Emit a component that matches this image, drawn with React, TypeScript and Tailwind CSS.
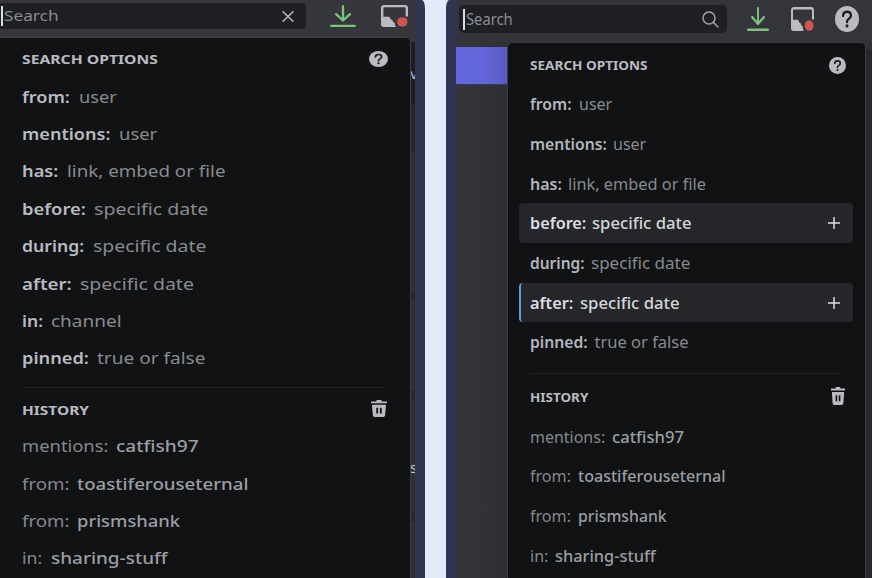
import { useLayoutEffect, useRef, useState } from "react";
import clsx from "clsx";

type Term = { k: string; kw: number; v: string; x: number; w: number; state?: "hover" | "active" };

/** Text stretched horizontally to an exact width. */
function Fit({ text, w, className }: { text: string; w: number; className?: string }) {
  const ref = useRef<HTMLSpanElement>(null);
  const [scale, setScale] = useState(1);
  useLayoutEffect(() => {
    if (ref.current) setScale(w / ref.current.offsetWidth);
  }, [w, text]);
  return (
    <span className="block shrink-0 whitespace-nowrap" style={{ width: w }}>
      <span ref={ref} className={clsx("inline-block origin-left", className)} style={{ transform: `scaleX(${scale})` }}>
        {text}
      </span>
    </span>
  );
}

const leftOptions: Term[] = [
  { k: "from:", kw: 48, v: "user", x: 9, w: 37.5 },
  { k: "mentions:", kw: 88.5, v: "user", x: 8, w: 38 },
  { k: "has:", kw: 36.5, v: "link, embed or file", x: 8, w: 158.5 },
  { k: "before:", kw: 64, v: "specific date", x: 8, w: 115 },
  { k: "during:", kw: 62.5, v: "specific date", x: 8.5, w: 114 },
  { k: "after:", kw: 49.5, v: "specific date", x: 8.5, w: 114.5 },
  { k: "in:", kw: 21.5, v: "channel", x: 7.5, w: 71 },
  { k: "pinned:", kw: 67, v: "true or false", x: 8, w: 108 },
];
const leftHistory: Term[] = [
  { k: "mentions:", kw: 86.5, v: "catfish97", x: 7.5, w: 82.5 },
  { k: "from:", kw: 47, v: "toastiferouseternal", x: 8, w: 171 },
  { k: "from:", kw: 47, v: "prismshank", x: 8, w: 103 },
  { k: "in:", kw: 20.5, v: "sharing-stuff", x: 8, w: 116 },
];
const rightOptions: Term[] = [
  { k: "from:", kw: 42, v: "user", x: 7, w: 33 },
  { k: "mentions:", kw: 77, v: "user", x: 6, w: 33 },
  { k: "has:", kw: 32, v: "link, embed or file", x: 6, w: 137.5 },
  { k: "before:", kw: 56, v: "specific date", x: 6, w: 99, state: "hover" },
  { k: "during:", kw: 54.5, v: "specific date", x: 6.5, w: 99 },
  { k: "after:", kw: 43.5, v: "specific date", x: 6, w: 99, state: "active" },
  { k: "pinned:", kw: 58, v: "true or false", x: 6.5, w: 94 },
];
const rightHistory: Term[] = [
  { k: "mentions:", kw: 75.5, v: "catfish97", x: 6, w: 71.5 },
  { k: "from:", kw: 41, v: "toastiferouseternal", x: 6.5, w: 148 },
  { k: "from:", kw: 41, v: "prismshank", x: 6.5, w: 89 },
  { k: "in:", kw: 18.5, v: "sharing-stuff", x: 6, w: 101 },
];

function Download({ className }: { className: string }) {
  return (
    <svg className={className} viewBox="0 0 26 22" preserveAspectRatio="none" fill="none" stroke="#7ec37c" strokeWidth="2.300" strokeLinecap="round" strokeLinejoin="round">
      <path d="M13 1.200v14.300M6 9.200l7 6.300 7-6.300M1.200 20.800h23.600" />
    </svg>
  );
}

function Inbox({ className }: { className: string }) {
  return (
    <svg className={className} viewBox="0 0 27 24" preserveAspectRatio="none">
      <path d="M1.200 14V3.400Q1.200 1.200 3.400 1.200h20.200Q25.800 1.200 25.800 3.400V12.500" fill="none" stroke="#b9bbc0" strokeWidth="2.400" />
      <path d="M0 12.800h8.500q.3 3 3 3.800.1 2.200 2.200 3 0 2.200 1.300 4.400H3Q0 24 0 21z" fill="#b9bbc0" />
      <circle cx="21.300" cy="18.500" r="5.200" fill="#d1564f" />
    </svg>
  );
}

function Help({ className }: { className: string }) {
  return (
    <svg className={className} viewBox="0 0 24 24" preserveAspectRatio="none">
      <circle cx="12" cy="12" r="12" fill="#b9bbc0" />
      <path d="M8.100 9q.2-3.600 4-3.600 3.800 0 3.800 3.300 0 2-2 3.100-1.900 1-1.900 3" fill="none" stroke="#1c1d20" strokeWidth="2.300" strokeLinecap="round" />
      <circle cx="12" cy="18.400" r="1.500" fill="#1c1d20" />
    </svg>
  );
}

function Trash({ className }: { className: string }) {
  return (
    <svg className={className} viewBox="0 0 16 18" preserveAspectRatio="none" fill="#b9bbc0">
      <path d="M5.500 0h5v1.500H16v2H0v-2h5.500z" />
      <path fillRule="evenodd" d="M1 5h14l-.8 11Q14 18 12 18H4q-2 0-2.200-2zM5.300 8.300v6h1.800v-6zM8.900 8.300v6h1.800v-6z" />
    </svg>
  );
}

function LeftRow({ t, history }: { t: Term; history?: boolean }) {
  return (
    <div className="flex h-[37.400px] items-center text-[15.500px] leading-5">
      <Fit text={t.k} w={t.kw} className={history ? "text-[#85878d]" : "font-semibold text-[#b9bbc0]"} />
      <div className="shrink-0" style={{ width: t.x }} />
      <Fit text={t.v} w={t.w} className={history ? "font-medium text-[#9b9da4]" : "text-[#888a90]"} />
    </div>
  );
}

function RightRow({ t, history }: { t: Term; history?: boolean }) {
  return (
    <div
      className={clsx(
        "flex h-[39.650px] items-center pr-[13px] text-[16.500px] leading-5",
        t.state && "rounded bg-[#25262a]",
        t.state === "active" ? "border-l-2 border-[#5f9ae8] pl-[9px]" : "pl-[11px]",
      )}
    >
      <Fit text={t.k} w={t.kw} className={history ? "text-[#85878d]" : t.state ? "font-semibold text-[#dcdde0]" : "font-semibold text-[#b4b6bb]"} />
      <div className="shrink-0" style={{ width: t.x }} />
      <Fit text={t.v} w={t.w} className={history ? "font-medium text-[#9b9da4]" : t.state ? "font-medium text-[#d4d5d9]" : "text-[#888a90]"} />
      {t.state && (
        <svg className="ml-auto h-3 w-3" viewBox="0 0 12 12" stroke="#dcdde0" strokeWidth="1.500">
          <path d="M6 0v12M0 6h12" />
        </svg>
      )}
    </div>
  );
}

function LeftPane() {
  return (
    <section className="flex h-full w-[425px] shrink-0 flex-col overflow-hidden border-r-[10px] border-[#323453] bg-[#36373c] [border-top-right-radius:3px_9px]">
      <div className="flex h-[37px] shrink-0 items-start">
        <div className="mt-[3px] flex h-[26px] w-[306px] items-center rounded-r bg-[#1f2024] pr-3">
          <div className="mr-0.5 ml-px h-5 w-[1.500px] bg-[#dcdde0]" />
          <div className="-mt-0.5 -ml-px">
            <Fit text="Search" w={54} className="text-[15px] leading-5 text-[#8a8c93]" />
          </div>
          <svg className="ml-auto h-[11px] w-3" viewBox="0 0 12 11" preserveAspectRatio="none" stroke="#b9bbc0" strokeWidth="1.500" strokeLinecap="round">
            <path d="M1 .7l10 9.600M11 .7L1 10.300" />
          </svg>
        </div>
        <Download className="mt-[5px] ml-6 h-[22px] w-[26px]" />
        <Inbox className="mt-[5px] ml-[25px] h-[22px] w-[27px]" />
      </div>
      <div className="flex min-h-0 flex-1">
        <div className="w-[411px] shrink-0 rounded-tr-[5px] border-t border-r border-[#3d3e42] bg-[#111214] pl-[22px]">
          <div className="flex h-10 items-center justify-between pr-[22.500px]">
            <Fit text="SEARCH OPTIONS" w={136} className="text-[12px] leading-4 font-bold text-[#b9bbc0]" />
            <Help className="mt-px h-4 w-[19px]" />
          </div>
          {leftOptions.map((t) => <LeftRow key={t.k} t={t} />)}
          <div className="mt-[9.500px] mr-[26px] h-px bg-[#202124]" />
          <div className="flex h-[40px] items-center justify-between pt-[2px] pr-[23px]">
            <Fit text="HISTORY" w={67} className="text-[12px] leading-4 font-bold text-[#b9bbc0]" />
            <Trash className="h-[17px] w-4" />
          </div>
          {leftHistory.map((t) => <LeftRow key={t.v} t={t} history />)}
        </div>
        <div className="flex w-1 shrink-0 flex-col overflow-hidden bg-[#2f3135] text-[#c5c6ca]">
          <div className="h-[5px] shrink-0 bg-[#36373c]" />
          <div className="h-[62px] shrink-0 bg-[#1d1e21] pt-[21px] text-[15px] leading-5">
            <span className="-ml-px text-[#aebfd8]">v</span>
          </div>
          <div className="h-12 shrink-0 bg-[#26272b]" />
          <div className="h-[139px] shrink-0" />
          <div className="h-[9px] shrink-0 bg-[#27282c]" />
          <div className="h-[90px] shrink-0" />
          <div className="h-[9px] shrink-0 bg-[#27282c]" />
          <div className="h-[114px] shrink-0 pt-[58px] text-[15px] leading-5">
            <span className="-ml-px">s</span>
          </div>
          <div className="h-[9px] shrink-0 bg-[#27282c]" />
        </div>
      </div>
    </section>
  );
}

function RightPane() {
  return (
    <section className="flex h-full w-[426px] shrink-0 flex-col overflow-hidden border-l-[10px] border-[#323453] bg-[#323337] [border-top-left-radius:3px_9px]">
      <div className="flex h-[42px] shrink-0 items-start bg-[#34353a] pl-[3px]">
        <div className="mt-[5px] flex h-7 w-[268px] items-center rounded-[5px] bg-[#1f2024] pr-2">
          <div className="mr-0.5 ml-1 h-[21px] w-[1.500px] bg-[#dcdde0]" />
          <div className="-ml-px">
            <Fit text="Search" w={47} className="text-[16px] leading-5 text-[#8a8c93]" />
          </div>
          <svg className="ml-auto h-[17px] w-[17px]" viewBox="0 0 17 17" fill="none" stroke="#a0a2a8" strokeWidth="1.500" strokeLinecap="round">
            <circle cx="7" cy="7" r="6" />
            <path d="M11.500 11.500L16 16" />
          </svg>
        </div>
        <Download className="mt-[7px] ml-5 h-6 w-[22px]" />
        <Inbox className="mt-[7px] ml-[22px] h-6 w-[23px]" />
        <Help className="mt-1.5 ml-[21px] h-[26px] w-6" />
      </div>
      <div className="flex min-h-0 flex-1">
        <div className="w-[51px] shrink-0 bg-linear-to-r from-[#333438] from-40% to-[#2d2e32] pt-[5px]">
          <div className="h-[38px] border-b border-[#34365e] bg-linear-to-r from-[#6466dc] from-50% to-[#595bc2]" />
        </div>
        <div className="w-[359px] shrink-0 rounded-t-[5px] border border-b-0 border-[#3a3b3f] bg-[#111214] pl-[11px]">
          <div className="flex h-[41.500px] items-center justify-between pt-px pr-[19px] pl-[11px]">
            <Fit text="SEARCH OPTIONS" w={118} className="text-[13px] leading-4 font-bold text-[#b9bbc0]" />
            <Help className="mt-[2px] h-[17px] w-[17px]" />
          </div>
          <div className="mr-[12px]">
            {rightOptions.map((t) => <RightRow key={t.k} t={t} />)}
          </div>
          <div className="mt-[11px] mr-[23px] ml-[11px] h-px bg-[#202124]" />
          <div className="flex h-[43px] items-center justify-between pt-[2px] pr-5 pl-[11px]">
            <Fit text="HISTORY" w={58} className="text-[13px] leading-4 font-bold text-[#b9bbc0]" />
            <Trash className="h-[18px] w-[14px]" />
          </div>
          {rightHistory.map((t) => <RightRow key={t.v} t={t} history />)}
        </div>
        <div className="flex-1 bg-[#27282c]">
          <div className="h-2 bg-[#303136]" />
        </div>
      </div>
    </section>
  );
}

export default function App() {
  return (
    <main className="flex h-[578px] w-[872px] justify-between overflow-hidden bg-[#e4ebf8] font-['Noto_Sans',sans-serif]">
      <LeftPane />
      <RightPane />
    </main>
  );
}
